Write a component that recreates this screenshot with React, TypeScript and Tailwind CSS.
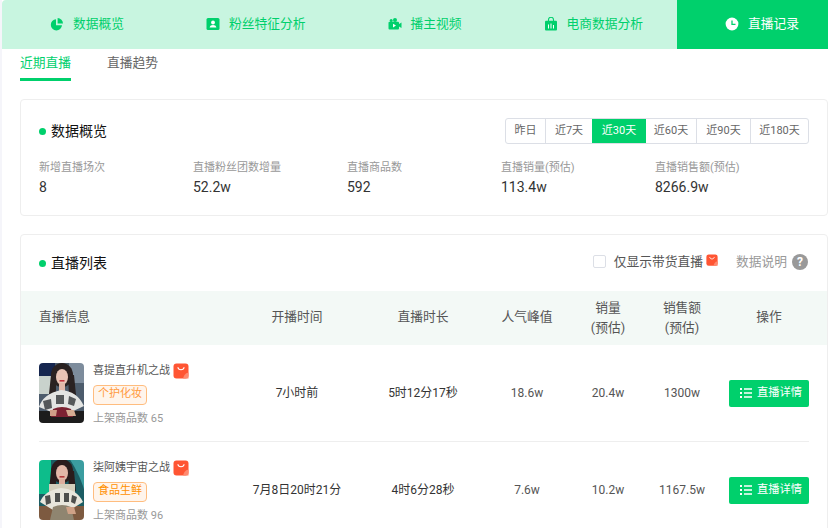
import React from "react";

const G = "#00d06c";

const TabIcon = ({ k, c }: { k: string; c: string }) => {
  if (k === "pie")
    return (
      <svg width="14" height="14" viewBox="0 0 14 14" fill={c}>
        <path d="M6 2.200v6h6A5.600 5.600 0 1 1 6 2.200z" />
        <path d="M7.600 1a5.600 5.600 0 0 1 5.400 5.600H7.600z" />
      </svg>
    );
  if (k === "user")
    return (
      <svg width="14" height="14" viewBox="0 0 14 14">
        <rect x="0.500" y="1" width="13" height="12" rx="1.500" fill={c} />
        <circle cx="7" cy="5.500" r="1.900" fill="#fff" />
        <path d="M3.600 10.600c.3-1.800 1.600-2.600 3.400-2.600s3.100.8 3.400 2.600z" fill="#fff" />
      </svg>
    );
  if (k === "video")
    return (
      <svg width="14" height="14" viewBox="0 0 14 14">
        <circle cx="3.200" cy="3.500" r="1.500" fill={c} />
        <circle cx="7" cy="3" r="2" fill={c} />
        <rect x="0.500" y="4.800" width="10.500" height="7.700" rx="1" fill={c} />
        <path d="M11 7l2.500-1.400v5.300L11 9.500z" fill={c} />
        <path d="M5 6.800l3 1.800-3 1.800z" fill="#fff" />
      </svg>
    );
  if (k === "bag")
    return (
      <svg width="14" height="14" viewBox="0 0 14 14">
        <path d="M4.500 4V2.800a2.500 2.500 0 0 1 5 0V4" stroke={c} strokeWidth="1.100" fill="none" />
        <rect x="1" y="3.800" width="12" height="9.700" rx="1" fill={c} />
        <path d="M4 7.500h1v4H4zM6.500 6.500h1v5h-1zM9 8h1v3.500H9z" fill="#fff" />
      </svg>
    );
  return (
    <svg width="14" height="14" viewBox="0 0 14 14">
      <circle cx="7" cy="7" r="6.400" fill={c} />
      <path d="M7 3.500V7.400H10.500" stroke="#00d06c" strokeWidth="1.300" fill="none" />
    </svg>
  );
};

const Bag = ({ s }: { s: number }) => (
  <svg width={s} height={s} viewBox="0 0 16 16">
    <rect x="0.500" y="0.500" width="15" height="15" rx="3" fill="#ff5533" />
    <path d="M10 15.500L15.500 15.500V9.500Q13 9.500 11.500 12Q10.500 13.500 10 15.500z" fill="#ff8a70" />
    <path d="M5 4.500c.3 3 5.700 3 6 0" stroke="#fff" strokeWidth="1.100" fill="none" strokeLinecap="round" />
  </svg>
);

const Avatar1 = () => (
  <svg width="45" height="60" viewBox="0 0 45 60" className="rounded-[4px] shrink-0">
    <defs>
      <filter id="b1"><feGaussianBlur stdDeviation="0.600" /></filter>
    </defs>
    <g filter="url(#b1)">
      <rect x="-2" y="-2" width="49" height="64" fill="#4d5c6c" />
      <rect x="-2" y="-2" width="18" height="15" fill="#14264f" />
      <rect x="30" y="-2" width="17" height="22" fill="#7d8c9c" />
      <rect x="-2" y="13" width="14" height="18" fill="#c9d2cc" />
      <rect x="-2" y="48" width="49" height="14" fill="#1f1a1a" />
      <ellipse cx="23" cy="12" rx="11" ry="12" fill="#2a2020" />
      <path d="M12 12h5v19h-7zM29 12h6l2 20h-7z" fill="#2a2020" />
      <ellipse cx="23" cy="14" rx="6" ry="8" fill="#e8c4b6" />
      <rect x="20" y="20" width="6" height="9" fill="#e2b8a9" />
      <rect x="20.500" y="17" width="5" height="1.600" fill="#c2343e" />
      <path d="M0 44Q4 31 22 27Q38 28 45 43L30 50Q22 46 15 50z" fill="#e3e4e2" />
      <path d="M4 38l8-2 1 9-7 2zM17 32h8v9h-8zM30 33l7 3-2 7-6-2z" fill="#55585a" />
      <path d="M14 46q9-4 18 0l2 8H12z" fill="#7c2330" />
      <path d="M27 47h8l2 6h-8z" fill="#d5ac92" />
      <path d="M11 47h7l-1 6h-6z" fill="#cf9f88" />
    </g>
  </svg>
);

const Avatar2 = () => (
  <svg width="45" height="60" viewBox="0 0 45 60" className="rounded-[4px] shrink-0">
    <defs>
      <filter id="b2"><feGaussianBlur stdDeviation="0.600" /></filter>
    </defs>
    <g filter="url(#b2)">
      <rect x="-2" y="-2" width="49" height="64" fill="#1c5d63" />
      <rect x="-2" y="-2" width="14" height="36" fill="#0bbd8b" />
      <path d="M30 -2h17v38q-5-20-17-38z" fill="#3a9da0" />
      <rect x="-2" y="46" width="49" height="16" fill="#7d5a3f" />
      <ellipse cx="23" cy="11" rx="11" ry="12" fill="#2a1f1f" />
      <path d="M12 11h5v19h-7zM29 11h6l2 20h-7z" fill="#2a1f1f" />
      <ellipse cx="23" cy="13" rx="6" ry="8" fill="#e4b8a8" />
      <rect x="20" y="19" width="6" height="8" fill="#dcae9d" />
      <rect x="20.500" y="16" width="5" height="1.600" fill="#b53a3c" />
      <rect x="10" y="24" width="26" height="10" fill="#d4cebb" />
      <path d="M1 42Q6 30 22 28Q38 29 44 42L31 50Q22 46 14 50z" fill="#e8e6dc" />
      <path d="M6 36l5-1 1 8-5 2zM16 33h5v9h-5zM25 33h5v9h-5zM33 35l5 2-2 7-4-2z" fill="#4e4f4d" />
      <path d="M14 47q9-4 18 0l3 13H11z" fill="#8f8570" />
      <path d="M27 47h8l2 7h-8z" fill="#cfa287" />
    </g>
  </svg>
);

const tabs = [
  ["pie", "数据概览"],
  ["user", "粉丝特征分析"],
  ["video", "播主视频"],
  ["bag", "电商数据分析"],
];

const ranges = [
  ["昨日", "w-[40px]"],
  ["近7天", "w-[46px]"],
  ["近30天", "w-[54px]"],
  ["近60天", "w-[51px]"],
  ["近90天", "w-[54px]"],
  ["近180天", "w-[57px]"],
];

const stats = [
  ["新增直播场次", "8"],
  ["直播粉丝团数增量", "52.2w"],
  ["直播商品数", "592"],
  ["直播销量(预估)", "113.4w"],
  ["直播销售额(预估)", "8266.9w"],
];

const grid = "grid grid-cols-[200px_116px_136px_72px_90px_58px_98px] items-center";

const Row = ({
  name,
  tag,
  tagClass,
  count,
  avatar,
  cells,
  border,
}: {
  name: string;
  tag: string;
  tagClass: string;
  count: string;
  avatar: React.ReactNode;
  cells: string[];
  border: boolean;
}) => (
  <div className={`${grid} h-[97px] border-b ${border ? "border-[#eeeeee]" : "border-transparent"}`}>
    <div className="flex items-center gap-[9px]">
      {avatar}
      <div className="flex flex-col items-start pt-[3px]">
        <div className="flex items-center gap-[3px] h-[18px] text-[11px] text-[#555555]">
          <span className="pt-[1px]">{name}</span>
          <Bag s={16} />
        </div>
        <div className={`mt-[5px] h-[20px] w-[54px] flex items-center justify-center rounded-[4px] border text-[11px] ${tagClass}`}>
          {tag}
        </div>
        <div className="mt-[5px] h-[18px] leading-[18px] text-[11px] text-[#999999]">上架商品数 {count}</div>
      </div>
    </div>
    {cells.map((c, i) => (
      <div key={i} className={`text-center text-[12px] ${i === 0 || i === 1 ? "text-[#333333]" : "text-[#555555]"}`}>
        {c}
      </div>
    ))}
    <button className="justify-self-end w-[80px] h-[27px] rounded-[2px] bg-[#00d06c] text-white text-[11.250px] flex items-center justify-start pl-[11px] gap-[5px]">
      <svg width="12" height="10" viewBox="0 0 12 10" fill="#fff">
        <path d="M0 0h2v2H0zM0 4h2v2H0zM0 8h2v2H0zM4 .2h8v1.600H4zM4 4.200h8v1.600H4zM4 8.200h8v1.600H4z" />
      </svg>
      <span className="pt-[1px]">直播详情</span>
    </button>
  </div>
);

export default function App() {
  return (
    <div
      className="h-[528px] w-[828px] overflow-hidden bg-[#f5f5fa] pl-[2px]"
      style={{ fontFamily: '"Roboto","Noto Sans CJK SC",sans-serif' }}
    >
      <div className="h-full bg-white">
        <div className="flex h-[49px] bg-[#c8f5e0] rounded-tl-[4px] text-[12.750px]">
          {tabs.map(([k, t]) => (
            <div key={t} className="flex items-center pl-[48px] pr-[34px] pb-[2px] text-[#00d06c] whitespace-nowrap">
              <TabIcon k={k} c={G} />
              <span className="ml-[9px]">{t}</span>
            </div>
          ))}
          <div className="flex-1 flex items-center pl-[48px] pb-[2px] bg-[#00d06c] text-white whitespace-nowrap">
            <TabIcon k="clock" c="#fff" />
            <span className="ml-[9px]">直播记录</span>
          </div>
        </div>

        <div className="flex pl-[18px] h-[32px] text-[12.750px] whitespace-nowrap">
          <div className="w-[51px] h-full border-b-[3px] border-[#00d06c] text-[#00d06c] text-center leading-[27px]">近期直播</div>
          <div className="ml-[36px] leading-[27px] text-[#666666]">直播趋势</div>
        </div>

        <div className="ml-[18px] mt-[18px] h-[117px] border border-[#eeeeee] rounded-[4px] px-[18px]">
          <div className="flex items-center justify-between mt-[18px]">
            <div className="flex items-center text-[14px] text-[#111111]">
              <span className="w-[7px] h-[7px] rounded-full bg-[#00d06c] mr-[5px]" />
              数据概览
            </div>
            <div className="flex h-[26px] border border-[#dcdfe6] rounded-[3px] text-[11px] text-[#666666] overflow-hidden">
              {ranges.map(([r, w], i) => (
                <div
                  key={r}
                  className={`${w} flex items-center justify-center pt-[1px] ${i === 2 ? "bg-[#00d06c] text-white" : i < 5 && i !== 1 ? "border-r border-[#dcdfe6]" : ""}`}
                >
                  {r}
                </div>
              ))}
            </div>
          </div>
          <div className="grid grid-cols-[154px_154px_154px_154px_154px] mt-[15px]">
            {stats.map(([l, v]) => (
              <div key={l} className="flex flex-col">
                <span className="text-[11px] leading-[18px] text-[#999999]">{l}</span>
                <span className="text-[14px] leading-[20px] text-[#333333]">{v}</span>
              </div>
            ))}
          </div>
        </div>

        <div className="ml-[18px] mt-[18px] border border-[#eeeeee] rounded-[4px]">
          <div className="h-[56px] flex items-center justify-between pl-[18px] pr-[19px]">
            <div className="flex items-center text-[14px] text-[#111111]">
              <span className="w-[7px] h-[7px] rounded-full bg-[#00d06c] mr-[5px]" />
              直播列表
            </div>
            <div className="flex items-center text-[12.750px] mb-[3px]">
              <span className="w-[13px] h-[13px] border border-[#dcdfe6] rounded-[2px] mr-[8px]" />
              <span className="text-[#555555]">仅显示带货直播</span>
              <span className="ml-[3px] mb-[3px]"><Bag s={12} /></span>
              <span className="ml-[18px] text-[#999999]">数据说明</span>
              <span className="ml-[5px] w-[16px] h-[16px] rounded-full bg-[#999999] text-white text-[12px] font-bold flex items-center justify-center">?</span>
            </div>
          </div>
          <div className={`${grid} h-[54px] bg-[#f3f9f6] px-[18px] text-[12.750px] leading-[20px] text-[#555555]`}>
            <div className="mb-[3px]">直播信息</div>
            <div className="text-center mb-[3px]">开播时间</div>
            <div className="text-center mb-[3px]">直播时长</div>
            <div className="text-center mb-[3px]">人气峰值</div>
            <div className="text-center">销量<br />(预估)</div>
            <div className="text-center">销售额<br />(预估)</div>
            <div className="text-center justify-self-end w-[80px] mb-[3px]">操作</div>
          </div>
          <div className="px-[18px]">
            <Row
              name="喜提直升机之战"
              tag="个护化妆"
              tagClass="border-[#ffbd7f] bg-[#fff5ec] text-[#ff9a3d]"
              count="65"
              avatar={<Avatar1 />}
              cells={["7小时前", "5时12分17秒", "18.6w", "20.4w", "1300w"]}
              border
            />
            <Row
              name="柒阿姨宇宙之战"
              tag="食品生鲜"
              tagClass="border-[#ffbd7f] bg-[#fff5ec] text-[#ff9000]"
              count="96"
              avatar={<Avatar2 />}
              cells={["7月8日20时21分", "4时6分28秒", "7.6w", "10.2w", "1167.5w"]}
              border={false}
            />
          </div>
        </div>
      </div>
    </div>
  );
}
